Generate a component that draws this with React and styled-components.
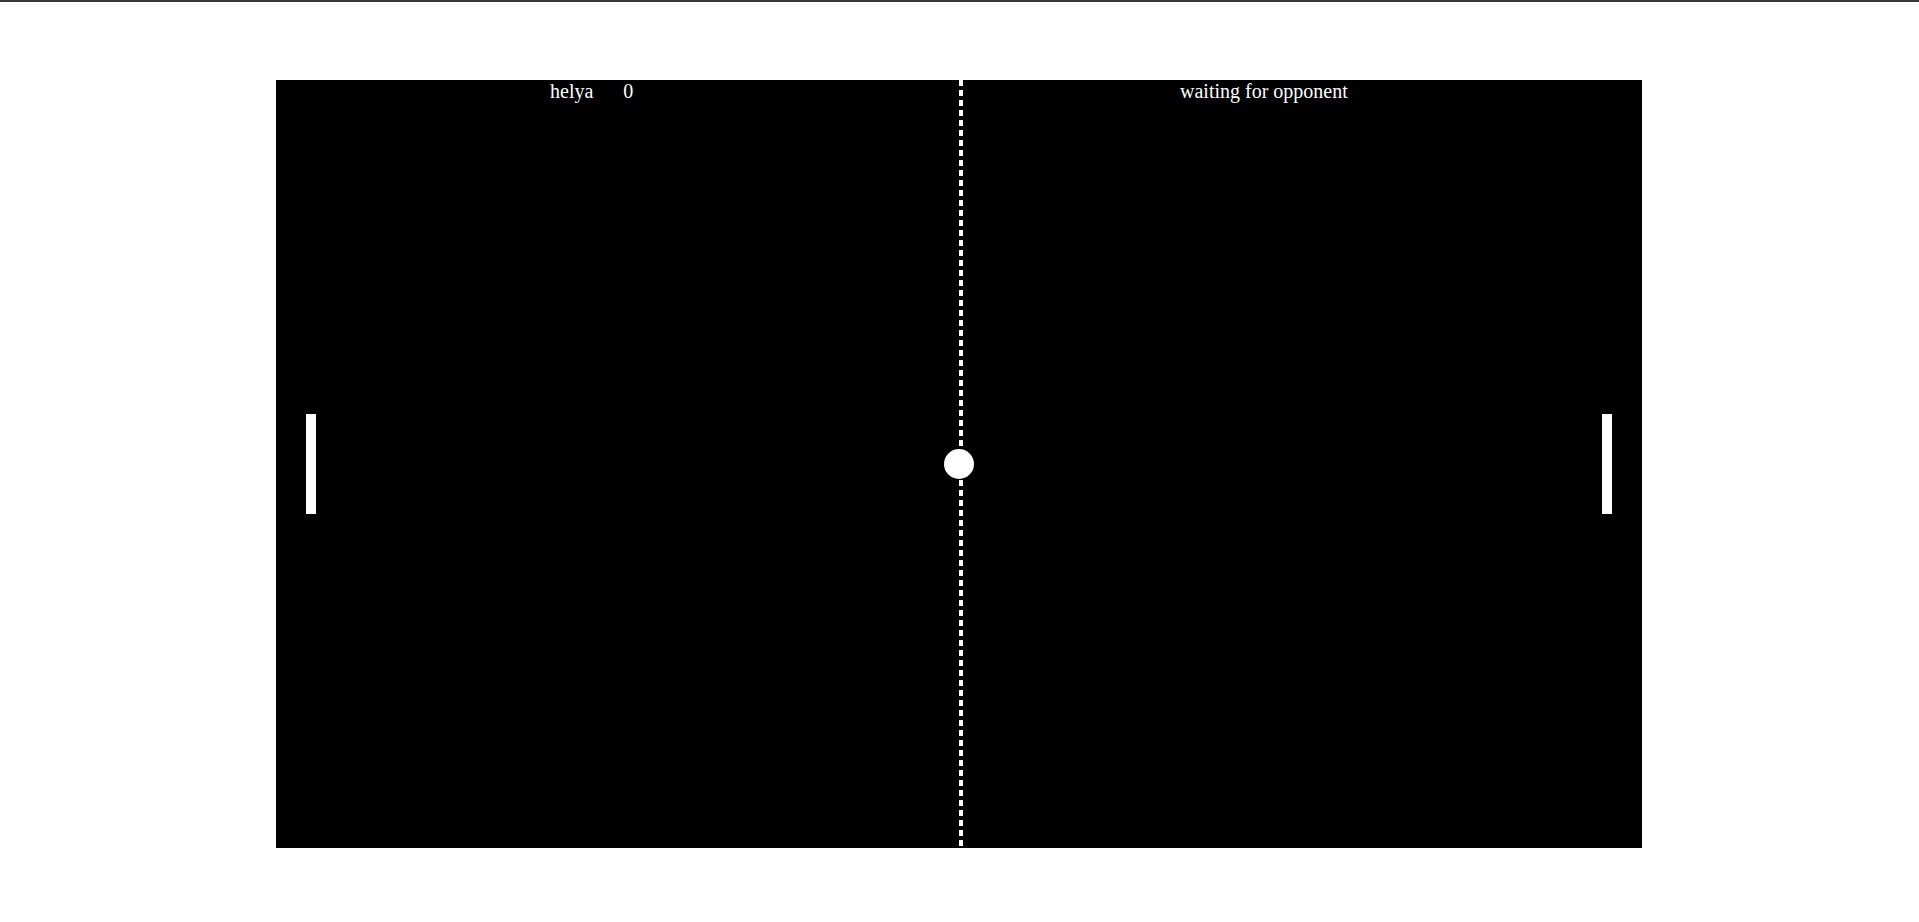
import styled, { createGlobalStyle } from "styled-components";

const GlobalStyle = createGlobalStyle`
  html, body {
    margin: 0;
    padding: 0;
    background: #fff;
    font-family: "Liberation Serif", "Times New Roman", serif;
  }
`;

const TopBar = styled.div`
  height: 2px;
  background: #3a3a3a;
`;

const Page = styled.main`
  display: flex;
  padding: 78px 0 0 276px;
`;

const Board = styled.div`
  position: relative;
  flex: none;
  width: 1366px;
  height: 768px;
  background: #000;
  overflow: hidden;
`;

const Net = styled.div`
  position: absolute;
  top: 0;
  bottom: 0;
  left: 683px;
  width: 4px;
  background: repeating-linear-gradient(
    to bottom,
    #fff 0,
    #fff 6px,
    transparent 6px,
    transparent 10px
  );
`;

const ScoreBar = styled.div`
  position: absolute;
  top: 0;
  left: 0;
  right: 0;
  display: grid;
  grid-template-columns: 683px 683px;
  color: #fff;
  font-size: 20px;
`;

const Side = styled.div`
  display: flex;
  gap: ${(p) => p.gap || 0}px;
  padding-left: ${(p) => p.offset}px;
`;

const Paddle = styled.div`
  position: absolute;
  top: 334px;
  left: ${(p) => p.x}px;
  width: 10px;
  height: 100px;
  background: #fff;
`;

const Ball = styled.div`
  position: absolute;
  left: 668px;
  top: 369px;
  width: 30px;
  height: 30px;
  border-radius: 50%;
  background: #fff;
`;

export default function App() {
  return (
    <>
      <GlobalStyle />
      <TopBar />
      <Page>
        <Board>
          <Net />
          <ScoreBar>
            <Side offset={274} gap={30}>
              <span>helya</span>
              <span>0</span>
            </Side>
            <Side offset={221}>
              <span>waiting for opponent</span>
            </Side>
          </ScoreBar>
          <Paddle x={30} />
          <Paddle x={1326} />
          <Ball />
        </Board>
      </Page>
    </>
  );
}
